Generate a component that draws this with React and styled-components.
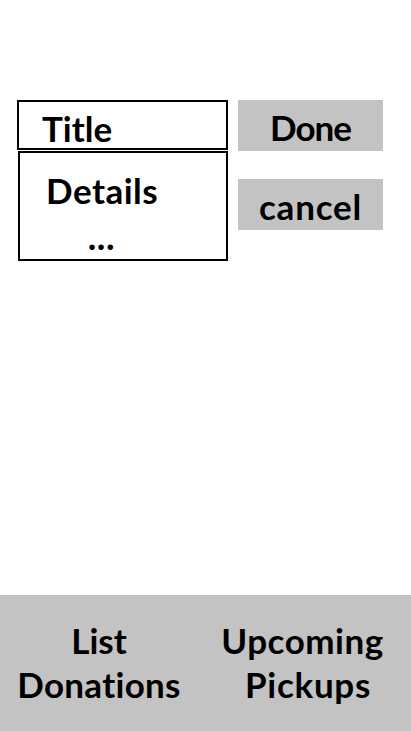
import React from "react";
import styled, { createGlobalStyle } from "styled-components";

const Global = createGlobalStyle`
  html, body { margin: 0; padding: 0; background: #fff; }
  * { box-sizing: border-box; }
`;

const Screen = styled.div`
  width: 411px;
  height: 731px;
  display: flex;
  flex-direction: column;
  justify-content: space-between;
  font-family: "Lato", "Open Sans", sans-serif;
  font-weight: 700;
  font-variant-ligatures: none;
  color: #000;
  overflow: hidden;
`;

const Form = styled.div`
  display: flex;
  gap: 10px;
  padding: 100px 0 0 17px;
`;

const Fields = styled.div`
  width: 211px;
  display: flex;
  flex-direction: column;
  gap: 1px;
`;

const TitleBox = styled.div`
  height: 50px;
  border: 2px solid #000;
  font-size: 35px;
  line-height: 52px;
  padding-left: 23px;
  overflow: hidden;
`;

const DetailsBox = styled.div`
  height: 110px;
  margin-left: 1px;
  border: 2px solid #000;
  font-size: 35px;
  line-height: 50px;
  letter-spacing: 0.5px;
  padding: 12px 0 0 26px;
  overflow: hidden;
`;

const Dots = styled.div`
  padding-left: 42px;
  line-height: 44px;
  font-size: 34px;
  font-weight: 900;
  letter-spacing: 1px;
`;

const Actions = styled.div`
  display: flex;
  flex-direction: column;
  gap: 28px;
`;

const ActionButton = styled.div`
  width: 145px;
  height: 51px;
  background: #c3c3c3;
  font-size: 35px;
  line-height: 54px;
  text-align: center;
  letter-spacing: ${(p) => p.$spacing || 0}px;
`;

const BottomBar = styled.div`
  height: 136px;
  background: #c3c3c3;
  display: flex;
  padding-top: 23px;
`;

const Tab = styled.div`
  width: ${(p) => p.$w}px;
  font-size: 35px;
  line-height: 44px;
  text-align: center;
`;

const TabLine = styled.div`
  padding-left: ${(p) => p.$indent || 0}px;
  letter-spacing: ${(p) => p.$spacing || 0}px;
  white-space: nowrap;
`;

export default function App() {
  return (
    <>
      <Global />
      <Screen>
        <Form>
          <Fields>
            <TitleBox>Title</TitleBox>
            <DetailsBox>
              Details
              <Dots>...</Dots>
            </DetailsBox>
          </Fields>
          <Actions>
            <ActionButton $spacing={-1}>Done</ActionButton>
            <ActionButton $spacing={0.8}>cancel</ActionButton>
          </Actions>
        </Form>
        <BottomBar>
          <Tab $w={198}>
            <TabLine>List</TabLine>
            <TabLine $spacing={0.3}>Donations</TabLine>
          </Tab>
          <Tab $w={209}>
            <TabLine $spacing={0.5}>Upcoming</TabLine>
            <TabLine $indent={11} $spacing={0.7}>Pickups</TabLine>
          </Tab>
        </BottomBar>
      </Screen>
    </>
  );
}
